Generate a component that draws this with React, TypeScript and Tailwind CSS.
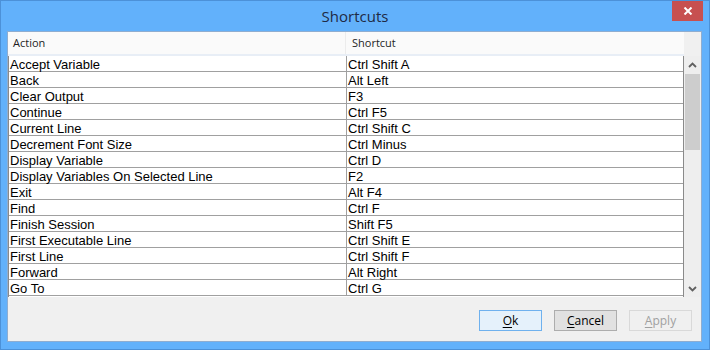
import React from "react";

const SHORTCUTS: [string, string][] = [
  ["Accept Variable", "Ctrl Shift A"],
  ["Back", "Alt Left"],
  ["Clear Output", "F3"],
  ["Continue", "Ctrl F5"],
  ["Current Line", "Ctrl Shift C"],
  ["Decrement Font Size", "Ctrl Minus"],
  ["Display Variable", "Ctrl D"],
  ["Display Variables On Selected Line", "F2"],
  ["Exit", "Alt F4"],
  ["Find", "Ctrl F"],
  ["Finish Session", "Shift F5"],
  ["First Executable Line", "Ctrl Shift E"],
  ["First Line", "Ctrl Shift F"],
  ["Forward", "Alt Right"],
  ["Go To", "Ctrl G"],
];

function Chevron({ up }: { up?: boolean }) {
  return (
    <svg width="9" height="6" viewBox="0 0 9 6" className={up ? "" : "rotate-180"}>
      <path d="M1 5 L4.5 1.5 L8 5" fill="none" stroke="#606060" strokeWidth={1.8} />
    </svg>
  );
}

function DialogButton({
  label,
  variant,
}: {
  label: string;
  variant: "default" | "normal" | "disabled";
}) {
  const styles = {
    default: "bg-[#e5f1fb] border-[#6fb1ee] text-black",
    normal: "bg-[#e1e1e1] border-[#adadad] text-black",
    disabled: "bg-[#f0f0f0] border-[#d9d9d9] text-[#a0a0a0]",
  }[variant];
  return (
    <button
      className={`w-[63px] h-[21px] border flex items-center justify-center text-[12px] leading-none ${styles}`}
    >
      <span>
        <span className="underline underline-offset-2">{label[0]}</span>
        {label.slice(1)}
      </span>
    </button>
  );
}

export default function App() {
  return (
    <div
      className="w-[710px] h-[350px] bg-[#62b1fb] border border-[#4c91d8] flex flex-col"
      style={{ fontFamily: '"Open Sans", "Noto Sans", sans-serif' }}
    >
      {/* Title bar */}
      <div className="h-[30px] relative flex items-center justify-center">
        <span className="text-[15px] text-[#1f2a44] mt-[1px]">Shortcuts</span>
        <div className="absolute right-[6px] top-0 w-[31px] h-[20px] bg-[#c75050] flex items-center justify-center">
          <svg width="10" height="8" viewBox="0 0 10 8">
            <path d="M1.5 0.5 L8.5 7.5 M8.5 0.5 L1.5 7.5" stroke="#fff" strokeWidth={2} />
          </svg>
        </div>
      </div>

      {/* Client area */}
      <div className="ml-[6px] mr-[7px] mb-[7px] flex-1 border border-[#8fadd0] bg-[#f0f0f0] flex flex-col">
        {/* Grid */}
        <div className="flex h-[265px]">
          <div className="w-[676px] flex flex-col">
            <div className="h-[24px] bg-[#fafafa] border-b-2 border-[#e8eef6] flex items-center text-[11px] text-[#1e1e1e]">
              <div className="w-[338px] h-full flex items-center pl-[5px] border-r border-[#ececec]">Action</div>
              <div className="flex-1 pl-[6px]">Shortcut</div>
            </div>
            <div
              className="flex-1 bg-white border-l border-r border-[#8a8a8a]"
              style={{ fontFamily: '"Liberation Sans", Arial, sans-serif' }}
            >
              {SHORTCUTS.map(([action, key]) => (
                <div key={action} className="h-[16px] flex border-b border-[#a0a0a0] text-[13px] leading-[15px] text-black">
                  <div className="w-[338px] pl-[1px] pt-[1px] border-r border-[#a0a0a0] whitespace-nowrap">{action}</div>
                  <div className="flex-1 pl-[1px] pt-[1px]">{key}</div>
                </div>
              ))}
            </div>
          </div>
          {/* Scrollbar */}
          <div className="w-[17px] flex flex-col bg-[#eeeeee]">
            <div className="h-[24px] bg-[#f0f0f0]" />
            <div className="h-[18px] flex items-center justify-center">
              <Chevron up />
            </div>
            <div className="h-[76px] mx-[1px] bg-[#cdcdcd]" />
            <div className="flex-1" />
            <div className="h-[17px] flex items-center justify-center">
              <Chevron />
            </div>
          </div>
        </div>

        {/* Footer buttons */}
        <div className="flex-1 flex justify-end items-start pt-[13px] pr-[9px] gap-[12px]">
          <DialogButton label="Ok" variant="default" />
          <DialogButton label="Cancel" variant="normal" />
          <DialogButton label="Apply" variant="disabled" />
        </div>
      </div>
    </div>
  );
}
